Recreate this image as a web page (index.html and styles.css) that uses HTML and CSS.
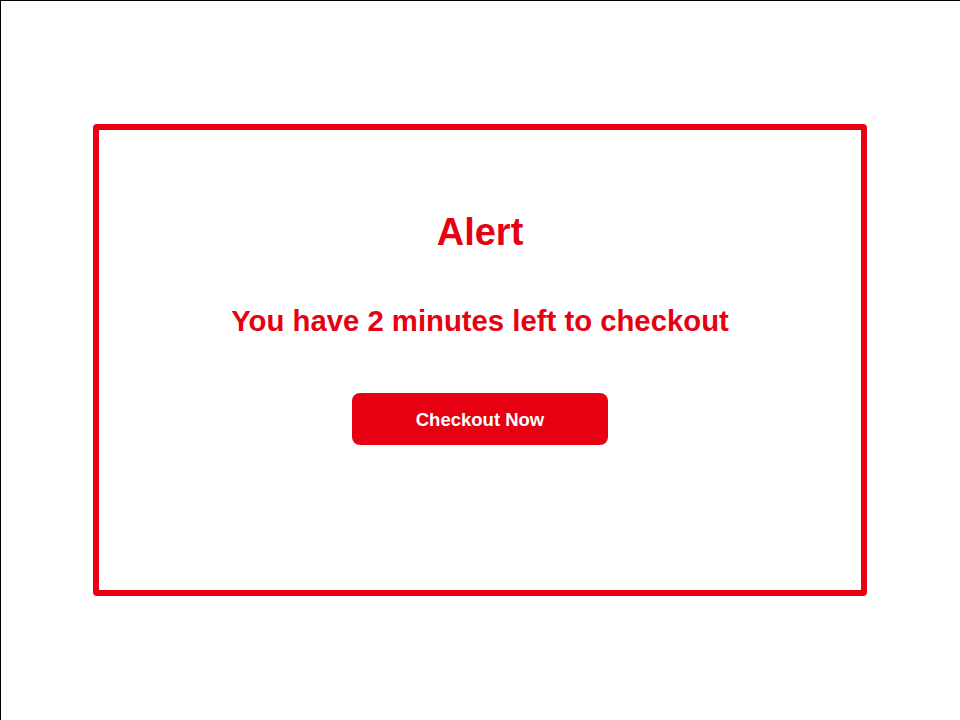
FILE: index.html
```html
<!DOCTYPE html>
<html lang="en">
<head>
<meta charset="utf-8">
<title>Alert</title>
<link rel="stylesheet" href="styles.css">
</head>
<body>
<div class="page">
  <div class="alert-box">
    <h1 class="alert-title">Alert</h1>
    <p class="alert-message">You have 2 minutes left to checkout</p>
    <button class="alert-button" type="button">Checkout Now</button>
  </div>
</div>
</body>
</html>
```

FILE: styles.css
```css
html, body {
  margin: 0;
  padding: 0;
  background: #ffffff;
}
body {
  font-family: "Liberation Sans", Arial, sans-serif;
}
.page {
  box-sizing: border-box;
  width: 960px;
  height: 720px;
  box-shadow: inset 1px 1px 0 #000;
  display: flex;
  align-items: center;
  justify-content: center;
}
.alert-box {
  box-sizing: border-box;
  width: 774px;
  height: 472px;
  border: 6px solid #e60012;
  border-radius: 4px;
  display: flex;
  flex-direction: column;
  align-items: center;
  padding-top: 80px;
}
.alert-title {
  margin: 0;
  font-size: 38px;
  font-weight: bold;
  color: #e60012;
  line-height: 44px;
}
.alert-message {
  margin: 50px 0 0;
  font-size: 29.3px;
  font-weight: bold;
  color: #e60012;
  line-height: 34px;
}
.alert-button {
  margin-top: 55px;
  width: 256px;
  height: 52px;
  border: none;
  border-radius: 8px;
  background: #e60012;
  color: #ffffff;
  font-family: "Liberation Sans", Arial, sans-serif;
  font-size: 18.5px;
  font-weight: bold;
  padding: 2px 0 0;
}
```
